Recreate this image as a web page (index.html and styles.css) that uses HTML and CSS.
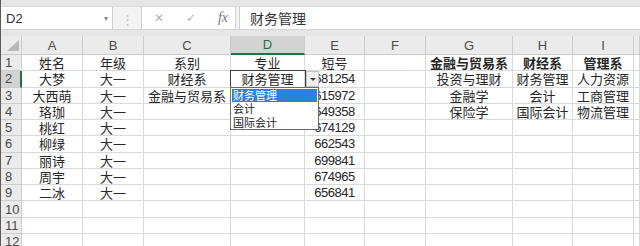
FILE: index.html
```html
<!DOCTYPE html>
<html lang="zh-CN">
<head>
    <meta charset="UTF-8">
    <title>Excel - 数据验证</title>
    <link rel="stylesheet" href="styles.css">
</head>
<body>
<div class="app">
    <div class="ribbon-edge"></div>

    <!-- formula bar -->
    <div class="fbar">
        <div class="namebox">
            <span>D2</span>
            <span class="nb-arrow">&#9662;</span>
        </div>
        <div class="grip">&#8942;</div>
        <div class="fx-box">
            <span class="fx-btn">&#10005;</span>
            <span class="fx-btn">&#10003;</span>
            <span class="fx-btn fx">fx</span>
        </div>
        <div class="formula">财务管理</div>
    </div>
    <div class="band"></div>

    <div class="sheet">
        <div class="row head">
            <div class="corner"><span class="tri"></span></div>
            <div class="ch">A</div>
            <div class="ch">B</div>
            <div class="ch">C</div>
            <div class="ch sel">D</div>
            <div class="ch">E</div>
            <div class="ch">F</div>
            <div class="ch">G</div>
            <div class="ch">H</div>
            <div class="ch">I</div>
            <div class="ch"></div>
        </div>
        <div class="row">
            <div class="rh">1</div>
            <div class="c">姓名</div><div class="c">年级</div><div class="c">系别</div><div class="c">专业</div><div class="c">短号</div>
            <div class="c"></div><div class="c b">金融与贸易系</div><div class="c b">财经系</div><div class="c b">管理系</div><div class="c"></div>
        </div>
        <div class="row">
            <div class="rh sel">2</div>
            <div class="c">大梦</div><div class="c">大一</div><div class="c">财经系</div><div class="c">财务管理</div><div class="c n">681254</div>
            <div class="c"></div><div class="c">投资与理财</div><div class="c">财务管理</div><div class="c">人力资源</div><div class="c"></div>
        </div>
        <div class="row">
            <div class="rh">3</div>
            <div class="c">大西萌</div><div class="c">大一</div><div class="c">金融与贸易系</div><div class="c"></div><div class="c n">615972</div>
            <div class="c"></div><div class="c">金融学</div><div class="c">会计</div><div class="c">工商管理</div><div class="c"></div>
        </div>
        <div class="row">
            <div class="rh">4</div>
            <div class="c">珞珈</div><div class="c">大一</div><div class="c"></div><div class="c"></div><div class="c n">649358</div>
            <div class="c"></div><div class="c">保险学</div><div class="c">国际会计</div><div class="c">物流管理</div><div class="c"></div>
        </div>
        <div class="row">
            <div class="rh">5</div>
            <div class="c">桃红</div><div class="c">大一</div><div class="c"></div><div class="c"></div><div class="c n">674129</div>
            <div class="c"></div><div class="c"></div><div class="c"></div><div class="c"></div><div class="c"></div>
        </div>
        <div class="row">
            <div class="rh">6</div>
            <div class="c">柳绿</div><div class="c">大一</div><div class="c"></div><div class="c"></div><div class="c n">662543</div>
            <div class="c"></div><div class="c"></div><div class="c"></div><div class="c"></div><div class="c"></div>
        </div>
        <div class="row">
            <div class="rh">7</div>
            <div class="c">丽诗</div><div class="c">大一</div><div class="c"></div><div class="c"></div><div class="c n">699841</div>
            <div class="c"></div><div class="c"></div><div class="c"></div><div class="c"></div><div class="c"></div>
        </div>
        <div class="row">
            <div class="rh">8</div>
            <div class="c">周宇</div><div class="c">大一</div><div class="c"></div><div class="c"></div><div class="c n">674965</div>
            <div class="c"></div><div class="c"></div><div class="c"></div><div class="c"></div><div class="c"></div>
        </div>
        <div class="row">
            <div class="rh">9</div>
            <div class="c">二冰</div><div class="c">大一</div><div class="c"></div><div class="c"></div><div class="c n">656841</div>
            <div class="c"></div><div class="c"></div><div class="c"></div><div class="c"></div><div class="c"></div>
        </div>
        <div class="row">
            <div class="rh">10</div>
            <div class="c"></div><div class="c"></div><div class="c"></div><div class="c"></div><div class="c"></div>
            <div class="c"></div><div class="c"></div><div class="c"></div><div class="c"></div><div class="c"></div>
        </div>
        <div class="row">
            <div class="rh">11</div>
            <div class="c"></div><div class="c"></div><div class="c"></div><div class="c"></div><div class="c"></div>
            <div class="c"></div><div class="c"></div><div class="c"></div><div class="c"></div><div class="c"></div>
        </div>
        <div class="row">
            <div class="rh">12</div>
            <div class="c"></div><div class="c"></div><div class="c"></div><div class="c"></div><div class="c"></div>
            <div class="c"></div><div class="c"></div><div class="c"></div><div class="c"></div><div class="c"></div>
        </div>

        <!-- active cell + validation dropdown -->
        <div class="active-cell"></div>
        <div class="dd-btn"><span class="dd-tri"></span></div>
        <ul class="dd-list">
            <li class="on">财务管理</li>
            <li>会计</li>
            <li>国际会计</li>
        </ul>
    </div>
</div>
</body>
</html>
```

FILE: styles.css
```css
* {
    box-sizing: border-box;
}
html, body {
    margin: 0;
    padding: 0;
    background: #fff;
}
body {
    width: 640px;
    height: 246px;
    overflow: hidden;
    font-family: "Noto Sans CJK SC", "Liberation Sans", sans-serif;
    color: #262626;
}
.app {
    border-left: 1px solid #5c5c5c;
    height: 246px;
    overflow: hidden;
}
.ribbon-edge {
    height: 7px;
    background: #e6e6e6;
    border-bottom: 1px solid #dadada;
}

/* formula bar */
.fbar {
    display: flex;
    height: 23px;
    background: #f3f3f3;
    border-bottom: 1px solid #d6d6d6;
}
.namebox {
    width: 112px;
    background: #fff;
    border-right: 1px solid #cfcfcf;
    display: flex;
    align-items: center;
    justify-content: space-between;
    padding: 0 4px 0 5px;
    font-family: "Liberation Sans", sans-serif;
    font-size: 13px;
    color: #333;
}
.nb-arrow {
    font-size: 8px;
    color: #888;
}
.grip {
    width: 28px;
    display: flex;
    align-items: center;
    justify-content: center;
    color: #c4c4c4;
    font-size: 13px;
}
.fx-box {
    width: 95px;
    background: #fff;
    border-left: 1px solid #d2d2d2;
    border-right: 1px solid #d2d2d2;
    display: flex;
    align-items: center;
    padding-left: 10px;
    gap: 18px;
}
.fx-btn {
    color: #b4b4b4;
    font-family: "DejaVu Sans", sans-serif;
    font-size: 12px;
    width: 14px;
    text-align: center;
}
.fx {
    font-family: "Liberation Serif", serif;
    font-style: italic;
    font-size: 14px;
    color: #777;
}
.formula {
    flex: 1;
    margin-left: 3px;
    background: #fff;
    border-left: 1px solid #d2d2d2;
    padding-left: 10px;
    font-size: 14px;
    line-height: 22px;
    color: #333;
}
.band {
    height: 6px;
    background: #e6e6e6;
}

/* grid */
.sheet {
    position: relative;
}
.row {
    display: grid;
    grid-template-columns: 21px 61px 61px 87px 74px 60px 61px 87px 60px 61px 1fr;
    height: 16.27px;
}
.row.head {
    height: 19px;
}
.corner, .ch, .rh {
    background: #ebebeb;
    border-right: 1px solid #cdcdcd;
    border-bottom: 1px solid #cdcdcd;
    color: #4a4a4a;
    font-family: "Liberation Sans", sans-serif;
    font-size: 13px;
    line-height: 15px;
    display: flex;
    align-items: center;
    justify-content: center;
}
.corner {
    position: relative;
}
.tri {
    position: absolute;
    right: 2px;
    bottom: 3px;
    width: 0;
    height: 0;
    border-left: 12px solid transparent;
    border-bottom: 11px solid #b8b8b8;
}
.ch.sel {
    background: #d3d3d3;
    border-bottom: 2px solid #217346;
    color: #217346;
}
.rh {
    justify-content: flex-start;
    padding-left: 4px;
}
.rh.sel {
    background: #d3d3d3;
    border-right: 2px solid #217346;
}
.c {
    border-right: 1px solid #dadada;
    border-bottom: 1px solid #dadada;
    display: flex;
    align-items: center;
    justify-content: center;
    font-size: 13px;
    line-height: 15px;
    white-space: nowrap;
}
.c.b {
    font-weight: bold;
}
.c.n {
    font-family: "Liberation Sans", sans-serif;
    letter-spacing: -0.45px;
}

/* data validation dropdown */
.active-cell {
    position: absolute;
    left: 229px;
    top: 34px;
    width: 76px;
    height: 18px;
    border: 1px solid #3f3f3f;
}
.dd-btn {
    position: absolute;
    left: 305px;
    top: 35px;
    width: 13px;
    height: 16px;
    background: #f0f0f0;
    border: 1px solid #c4c4c4;
    display: flex;
    align-items: center;
    justify-content: center;
}
.dd-tri {
    width: 0;
    height: 0;
    border-left: 3px solid transparent;
    border-right: 3px solid transparent;
    border-top: 3px solid #444;
}
.dd-list {
    position: absolute;
    left: 229px;
    top: 51px;
    width: 89px;
    height: 43px;
    margin: 0;
    padding: 1px;
    list-style: none;
    background: #fff;
    border: 1px solid #6b6b6b;
}
.dd-list li {
    height: 13.3px;
    line-height: 13.3px;
    font-size: 11px;
    padding-left: 1px;
    color: #222;
}
.dd-list li.on {
    background: #2f7fdc;
    color: #fff;
}
```
